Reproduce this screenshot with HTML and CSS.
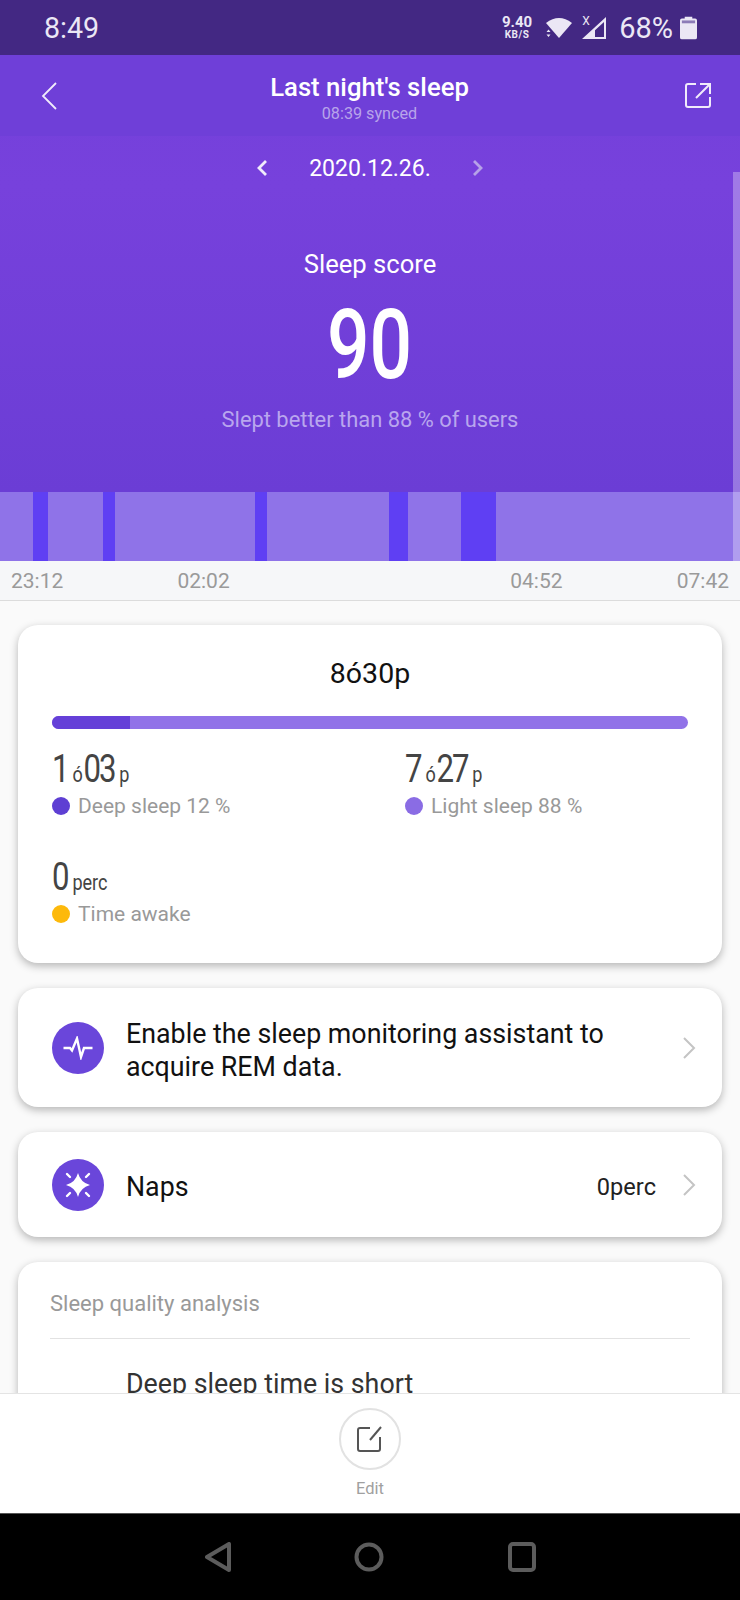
FILE: index.html
```html
<!DOCTYPE html>
<html lang="en">
<head>
    <meta charset="UTF-8">
    <meta name="viewport" content="width=device-width, initial-scale=1.0">
    <title>Last night's sleep</title>
    <link rel="stylesheet" href="styles.css">
</head>
<body>
<div class="phone">
    <div class="statusbar">
        <span class="clock">8:49</span>
        <div class="status-right">
            <div class="speed"><b>9.40</b><small>KB/S</small></div>
            <svg class="wifi" width="28" height="22" viewBox="0 0 28 22">
                <path d="M1 6 Q14 -4 27 6 L14 21 Z" fill="#ebe7f5"/>
                <path d="M1.5 15 L3.5 12.5 L5.5 15 Z M1.5 17.5 L5.5 17.5 L3.5 20 Z" fill="#ebe7f5"/>
            </svg>
            <div class="signal-box">
                <svg width="26" height="24" viewBox="0 0 26 24">
                    <path d="M1 23 L25 1 L25 23 Z M14 21 L23 21 L23 6 L14 14.3 Z" fill="#ebe7f5" fill-rule="evenodd"/>
                </svg>
                <span class="signal-x">X</span>
            </div>
            <span class="battery-text">68%</span>
            <svg class="battery" width="17" height="24" viewBox="0 0 18 24">
                <path d="M5 0 H13 V2 H16 Q18 2 18 4 V22 Q18 24 16 24 H2 Q0 24 0 22 V4 Q0 2 2 2 H5 Z" fill="#ebe7f5"/>
                <rect x="2" y="4" width="14" height="3" fill="#8d7cb8"/>
            </svg>
        </div>
    </div>

    <div class="hero">
        <div class="topbar">
            <svg class="back" width="16" height="28" viewBox="0 0 16 28">
                <path d="M15 1 L2 14 L15 27" fill="none" stroke="#f0ebfb" stroke-width="1.8"/>
            </svg>
            <div class="title-box">
                <div class="title">Last night's sleep</div>
                <div class="synced">08:39 synced</div>
            </div>
            <svg class="share" width="27" height="27" viewBox="0 0 27 27">
                <path d="M11 2 H3 Q1 2 1 4 V23 Q1 25 3 25 H23 Q25 25 25 23 V15" fill="none" stroke="#f0ebfb" stroke-width="2"/>
                <path d="M11 16 L25 2 M15 2 H25 V12" fill="none" stroke="#f0ebfb" stroke-width="2"/>
            </svg>
        </div>
        <div class="date-row">
            <svg width="12" height="18" viewBox="0 0 12 18"><path d="M10 2 L3 9 L10 16" fill="none" stroke="#f0ebfb" stroke-width="2.8"/></svg>
            <span class="date">2020.12.26.</span>
            <svg width="12" height="18" viewBox="0 0 12 18"><path d="M2 2 L9 9 L2 16" fill="none" stroke="#b6a2e8" stroke-width="2.8"/></svg>
        </div>
        <div class="score-label">Sleep score</div>
        <div class="score"><span class="narrow">90</span></div>
        <div class="better">Slept better than 88 % of users</div>
    </div>

    <div class="timeline">
        <i class="deep seg1"></i>
        <i class="deep seg2"></i>
        <i class="deep seg3"></i>
        <i class="deep seg4"></i>
        <i class="deep seg5"></i>
    </div>
    <div class="scrollbar"></div>
    <div class="times">
        <span>23:12</span>
        <span>02:02</span>
        <span class="spacer"></span>
        <span>04:52</span>
        <span>07:42</span>
    </div>

    <div class="content">
        <div class="card summary">
            <div class="total">8ó30p</div>
            <div class="bar"><div class="bar-deep"></div></div>
            <div class="stats">
                <div class="stat">
                    <div class="num"><span class="big">1</span><span class="unit">ó</span><span class="big">03</span><span class="unit">p</span></div>
                    <div class="legend"><i class="dot dot-deep"></i>Deep sleep 12 %</div>
                </div>
                <div class="stat">
                    <div class="num"><span class="big">7</span><span class="unit">ó</span><span class="big">27</span><span class="unit">p</span></div>
                    <div class="legend"><i class="dot dot-light"></i>Light sleep 88 %</div>
                </div>
                <div class="stat">
                    <div class="num"><span class="big">0</span><span class="unit">perc</span></div>
                    <div class="legend"><i class="dot dot-awake"></i>Time awake</div>
                </div>
            </div>
        </div>

        <div class="card row rem">
            <div class="icon">
                <svg width="32" height="24" viewBox="0 0 32 24"><path d="M1.5 12 H8 L10 14.5 L15 2.5 L19 21 L22 12 H30.5" fill="none" stroke="#fff" stroke-width="2.4"/></svg>
            </div>
            <div class="row-text">Enable the sleep monitoring assistant to acquire REM data.</div>
            <svg class="chevron" width="14" height="22" viewBox="0 0 14 22"><path d="M2 1 L12 11 L2 21" fill="none" stroke="#c4c4c4" stroke-width="2"/></svg>
        </div>

        <div class="card row naps">
            <div class="icon">
                <svg width="32" height="32" viewBox="0 0 32 32">
                    <path d="M16 4 Q18.5 13.5 28 16 Q18.5 18.5 16 28 Q13.5 18.5 4 16 Q13.5 13.5 16 4 Z" fill="#fff"/>
                    <path d="M5 5 L8 8 M27 5 L24 8 M5 27 L8 24 M27 27 L24 24" stroke="#fff" stroke-width="2.4" stroke-linecap="round"/>
                </svg>
            </div>
            <div class="row-text">Naps</div>
            <div class="row-value">0perc</div>
            <svg class="chevron" width="14" height="22" viewBox="0 0 14 22"><path d="M2 1 L12 11 L2 21" fill="none" stroke="#c4c4c4" stroke-width="2"/></svg>
        </div>

        <div class="card analysis">
            <div class="analysis-head">Sleep quality analysis</div>
            <div class="analysis-item">Deep sleep time is short</div>
        </div>
    </div>

    <div class="footer">
        <div class="edit-btn">
            <svg width="28" height="28" viewBox="0 0 28 28">
                <path d="M14 3 H4 Q2 3 2 5 V24 Q2 26 4 26 H22 Q24 26 24 24 V12" fill="none" stroke="#555" stroke-width="2"/>
                <path d="M14 15 L25 2" fill="none" stroke="#555" stroke-width="2"/>
            </svg>
        </div>
        <div class="edit-label">Edit</div>
    </div>

    <div class="navbar">
        <svg width="28" height="30" viewBox="0 0 28 30"><path d="M24 2 V28 L2 15 Z" fill="none" stroke="#5c5c5c" stroke-width="4" stroke-linejoin="round"/></svg>
        <svg width="30" height="30" viewBox="0 0 30 30"><circle cx="15" cy="15" r="12.5" fill="none" stroke="#5c5c5c" stroke-width="4"/></svg>
        <svg class="recents" width="28" height="30" viewBox="0 0 28 30"><rect x="2" y="2" width="24" height="26" rx="3" fill="none" stroke="#5c5c5c" stroke-width="4"/></svg>
    </div>
</div>
</body>
</html>
```

FILE: styles.css
```css
*{
    box-sizing: border-box;
}
html,body{
    margin: 0;
    padding: 0;
    background: #fff;
}
.phone{
    position: relative;
    width: 740px;
    height: 1600px;
    overflow: hidden;
    display: flex;
    flex-direction: column;
    font-family: Roboto, "Liberation Sans", sans-serif;
    background: #fafafa;
}

/* status bar */
.statusbar{
    height: 55px;
    flex: none;
    background: #432883;
    color: #ebe7f5;
    display: flex;
    align-items: center;
    justify-content: space-between;
    padding: 6px 43px 6px 44px;
}
.clock{
    font-size: 28.6px;
}
.status-right{
    display: flex;
    align-items: center;
}
.speed{
    display: flex;
    flex-direction: column;
    align-items: center;
    line-height: 1;
    margin-right: 13px;
}
.speed b{
    font-size: 15px;
}
.speed small{
    font-size: 10px;
    font-weight: 700;
    letter-spacing: .5px;
}
.wifi{
    margin-right: 8px;
}
.signal-box{
    position: relative;
    width: 26px;
    height: 24px;
    margin-right: 12px;
}
.signal-x{
    position: absolute;
    left: 1px;
    top: -2px;
    font-size: 12px;
    line-height: 14px;
}
.battery-text{
    font-size: 29px;
    margin-right: 7px;
}

/* purple header */
.hero{
    height: 437px;
    flex: none;
    background: linear-gradient(#7340da, #7741dc 30%, #6b3dd5);
    color: #fff;
    text-align: center;
}
.topbar{
    height: 81px;
    display: flex;
    align-items: flex-start;
    justify-content: space-between;
    padding: 27px 28px 0 41px;
    background: #6f3fd8;
}
.title-box{
    margin: -10px 0 0 -3px;
}
.title{
    font-size: 25.7px;
    font-weight: 500;
    line-height: 30px;
}
.synced{
    font-size: 16.2px;
    line-height: 24px;
    color: #b8a4ea;
}
.date-row{
    display: flex;
    align-items: center;
    justify-content: center;
    gap: 41px;
    height: 64px;
}
.date{
    font-size: 23px;
}
.score-label{
    margin-top: 49px;
    font-size: 25.6px;
    line-height: 30px;
}
.score{
    font-size: 96px;
    font-weight: 500;
    line-height: 92px;
    margin-top: 20px;
}
.narrow{
    display: inline-block;
    transform: scaleX(.78);
}
.better{
    margin-top: 16px;
    font-size: 21.9px;
    line-height: 26px;
    color: #b9a6ee;
}

/* sleep timeline */
.timeline{
    position: relative;
    height: 69px;
    flex: none;
    background: #8f73e8;
}
.deep{
    position: absolute;
    top: 0;
    bottom: 0;
    background: #5f3ff3;
}
.seg1{ left: 33px; width: 15px; }
.seg2{ left: 103px; width: 12px; }
.seg3{ left: 255px; width: 12px; }
.seg4{ left: 389px; width: 19px; }
.seg5{ left: 461px; width: 35px; }
.scrollbar{
    position: absolute;
    top: 172px;
    right: 0;
    width: 7px;
    height: 389px;
    background: rgba(255,255,255,.3);
}
.times{
    height: 40px;
    flex: none;
    display: flex;
    align-items: center;
    padding: 0 11px;
    background: #f6f7f9;
    border-bottom: 1px solid #dcdcdc;
    font-size: 21px;
    color: #9a9a9a;
}
.times span{
    width: 0;
    flex: 1;
}
.times span:last-child{
    flex: none;
    width: auto;
}

/* cards */
.content{
    flex: 1;
    overflow: hidden;
    padding: 24px 18px 0;
    display: flex;
    flex-direction: column;
    gap: 25px;
    background: #fafafa;
}
.card{
    flex: none;
    background: #fff;
    border-radius: 20px;
    box-shadow: 0 3px 9px rgba(0,0,0,.28);
}
.summary{
    height: 338px;
    padding: 0 34px;
}
.total{
    text-align: center;
    font-size: 28.5px;
    line-height: 36px;
    padding-top: 31px;
    color: #111;
}
.bar{
    height: 13px;
    margin-top: 24px;
    border-radius: 7px;
    background: #9172e8;
    overflow: hidden;
}
.bar-deep{
    width: 78px;
    height: 13px;
    background: #6540d8;
}
.stats{
    display: grid;
    grid-template-columns: 353px 1fr;
    row-gap: 34px;
    margin-top: 17px;
}
.num{
    height: 46px;
    color: #444;
    white-space: nowrap;
    transform: scaleX(.82);
    transform-origin: left;
}
.big{
    font-size: 38px;
    line-height: 46px;
    letter-spacing: -2.5px;
}
.unit{
    font-size: 22px;
    margin: 0 1px 0 6px;
}
.legend{
    display: flex;
    align-items: center;
    font-size: 21px;
    line-height: 28px;
    color: #999;
}
.dot{
    width: 18px;
    height: 18px;
    border-radius: 50%;
    margin-right: 8px;
}
.dot-deep{
    background: #5e3fd3;
}
.dot-light{
    background: #8a6ce4;
}
.dot-awake{
    background: #fdb90b;
}
.row{
    display: flex;
    align-items: center;
    padding: 0 26px 0 34px;
}
.rem{
    height: 119px;
}
.naps{
    height: 105px;
}
.icon{
    width: 52px;
    height: 52px;
    flex: none;
    border-radius: 50%;
    background: #6a46da;
    display: flex;
    align-items: center;
    justify-content: center;
    margin-right: 22px;
}
.row-text{
    flex: 1;
    font-size: 26.8px;
    line-height: 33px;
    color: #111;
    padding-top: 6px;
    padding-right: 40px;
}
.row-value{
    font-size: 23.6px;
    padding-top: 4px;
    color: #222;
    margin-right: 26px;
}
.naps .row-text{
    padding-top: 5px;
    padding-right: 0;
}
.chevron{
    flex: none;
}
.analysis{
    height: 200px;
    padding: 0 32px;
}
.analysis-head{
    height: 77px;
    line-height: 84px;
    font-size: 22px;
    color: #999;
    border-bottom: 1px solid #e2e2e2;
}
.analysis-item{
    padding: 29px 0 0 76px;
    font-size: 26.8px;
    line-height: 32px;
    color: #333;
}

/* bottom */
.footer{
    height: 120px;
    flex: none;
    background: #fff;
    border-top: 1px solid #e4e4e4;
    display: flex;
    flex-direction: column;
    align-items: center;
    padding-top: 14px;
    position: relative;
}
.edit-btn{
    width: 62px;
    height: 62px;
    border: 2px solid #e2e2e2;
    border-radius: 50%;
    display: flex;
    align-items: center;
    justify-content: center;
}
.edit-label{
    margin-top: 9px;
    font-size: 16.5px;
    color: #a0a0a0;
}
.navbar{
    height: 87px;
    flex: none;
    background: #000;
    display: flex;
    align-items: center;
    justify-content: center;
    gap: 121px;
    border-top: 1px solid #555;
}
.recents{
    margin-left: 3px;
}
```
